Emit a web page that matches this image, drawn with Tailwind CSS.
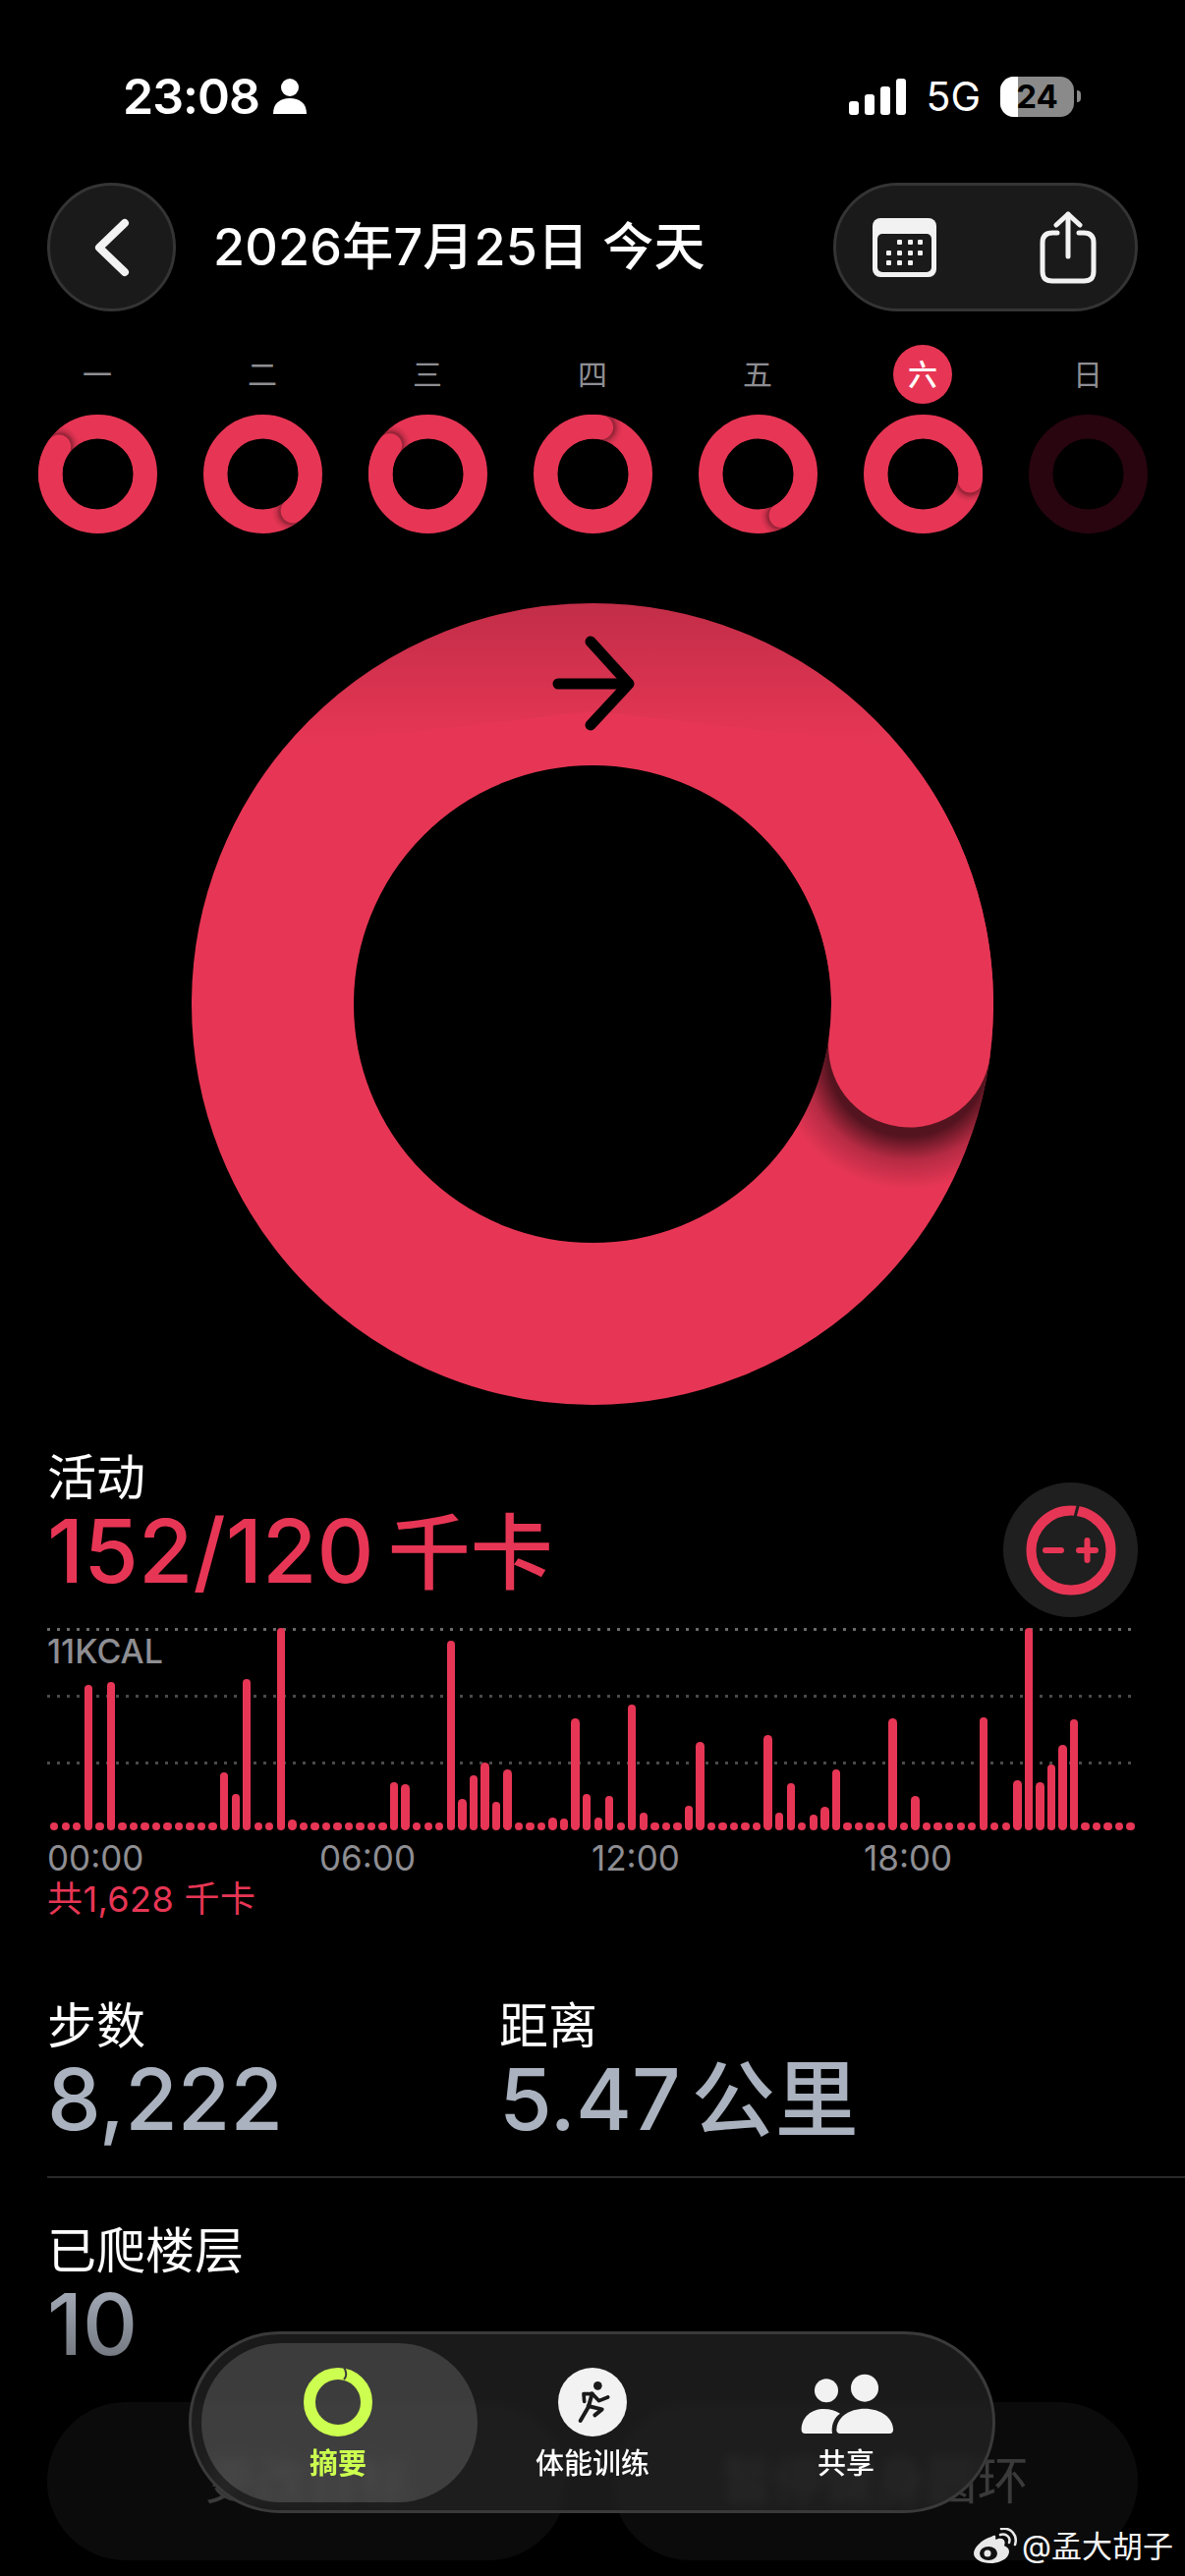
<!DOCTYPE html>
<html lang="zh">
  <head>
    <title>Activity</title>
    <meta charset="utf-8" />
    <meta name="viewport" content="width=device-width, initial-scale=1" />
    <script src="https://cdn.jsdelivr.net/npm/@tailwindcss/browser@4"></script>
  </head>
  <body class="bg-black">
    <div class="relative w-[1206px] h-[2622px] overflow-hidden bg-black text-white font-['Inter','Noto_Sans_CJK_SC',sans-serif]">
      <!-- status bar -->
      <div class="flex items-center justify-between h-[186px] pt-[10px] pl-[125px] pr-[106px]">
        <div class="flex items-center gap-[14px]">
          <span class="text-[50px] leading-none font-semibold tracking-[-1px]">23:08</span>
          <svg width="34" height="36" viewBox="0 0 34 36" fill="#fff">
            <circle cx="17" cy="9" r="9" />
            <path d="M0 36 C0 25 7 20 17 20 C27 20 34 25 34 36 Z" />
          </svg>
        </div>
        <div class="flex items-center">
          <svg width="58" height="37" viewBox="0 0 58 37" fill="#fff">
            <rect x="0" y="23" width="10" height="14" rx="3" />
            <rect x="16" y="16" width="10" height="21" rx="3" />
            <rect x="32" y="8" width="10" height="29" rx="3" />
            <rect x="48" y="0" width="10" height="37" rx="3" />
          </svg>
          <span class="ml-[20px] text-[41px] leading-none font-normal">5G</span>
          <div class="relative ml-[20px] w-[75px] h-[41px] rounded-[14px] overflow-hidden bg-[#8a8a8a] flex items-center justify-center">
            <div class="absolute left-0 top-0 bottom-0 w-[18px] bg-white"></div>
            <span class="relative text-[33px] leading-none font-bold text-black">24</span>
          </div>
          <div class="ml-[3px] w-[4px] h-[12px] rounded-r-full bg-[#8a8a8a]"></div>
        </div>
      </div>

      <!-- nav -->
      <div class="flex items-center justify-between h-[131px] px-[48px]">
        <div class="flex items-center">
          <button class="flex items-center justify-center w-[131px] h-[131px] rounded-full bg-[#1a1a1a] border-[3px] border-[#343434]">
            <svg width="40" height="60" viewBox="0 0 40 60" fill="none" stroke="#f2f2f2" stroke-width="8" stroke-linecap="round" stroke-linejoin="round">
              <path d="M33 5 L7 30 L33 55" />
            </svg>
          </button>
          <span class="ml-[38px] text-[52px] leading-none font-medium tracking-[0.2px]">2026年7月25日 今天</span>
        </div>
        <div class="flex items-center justify-between w-[310px] h-[131px] pl-[37px] pr-[39px] rounded-full bg-[#1a1a1a] border-[3px] border-[#343434]">
          <svg width="65" height="60" viewBox="0 0 65 60">
            <rect width="65" height="60" rx="8" fill="#f2f2f2" />
            <rect x="5" y="16" width="55" height="39" rx="5" fill="#1a1a1a" />
            <g fill="#f2f2f2">
              <rect x="25" y="22" width="5" height="5" rx="1" />
              <rect x="36" y="22" width="5" height="5" rx="1" />
              <rect x="46" y="22" width="5" height="5" rx="1" />
              <rect x="14" y="33" width="5" height="5" rx="1" />
              <rect x="25" y="33" width="5" height="5" rx="1" />
              <rect x="36" y="33" width="5" height="5" rx="1" />
              <rect x="46" y="33" width="5" height="5" rx="1" />
              <rect x="14" y="43" width="5" height="5" rx="1" />
              <rect x="25" y="43" width="5" height="5" rx="1" />
              <rect x="36" y="43" width="5" height="5" rx="1" />
            </g>
          </svg>
          <svg width="58" height="74" viewBox="0 0 58 74" fill="none" stroke="#f2f2f2" stroke-width="5" stroke-linecap="round" stroke-linejoin="round">
            <path d="M18 22 H13 C6 22 3 26 3 32 V61 C3 68 6 71 13 71 H45 C52 71 55 68 55 61 V32 C55 26 52 22 45 22 H40" />
            <path d="M29 46 V3" />
            <path d="M17 14 L29 3 L41 14" />
          </svg>
        </div>
      </div>

      <!-- week -->
      <div class="grid grid-cols-7 px-[15px] mt-[34px]">
        <div class="flex flex-col items-center"><span class="flex items-center justify-center w-[60px] h-[60px] text-[30px] text-[#8e8e93]">一</span><div class="week-ring mt-[11px] w-[121px] h-[121px]" data-angle="215" data-shade="0.45"></div></div>
        <div class="flex flex-col items-center"><span class="flex items-center justify-center w-[60px] h-[60px] text-[30px] text-[#8e8e93]">二</span><div class="week-ring mt-[11px] w-[121px] h-[121px]" data-angle="51" data-shade="0.45"></div></div>
        <div class="flex flex-col items-center"><span class="flex items-center justify-center w-[60px] h-[60px] text-[30px] text-[#8e8e93]">三</span><div class="week-ring mt-[11px] w-[121px] h-[121px]" data-angle="217" data-shade="0.45"></div></div>
        <div class="flex flex-col items-center"><span class="flex items-center justify-center w-[60px] h-[60px] text-[30px] text-[#8e8e93]">四</span><div class="week-ring mt-[11px] w-[121px] h-[121px]" data-angle="280" data-shade="0.45"></div></div>
        <div class="flex flex-col items-center"><span class="flex items-center justify-center w-[60px] h-[60px] text-[30px] text-[#8e8e93]">五</span><div class="week-ring mt-[11px] w-[121px] h-[121px]" data-angle="61" data-shade="0.45"></div></div>
        <div class="flex flex-col items-center"><span class="flex items-center justify-center w-[60px] h-[60px] rounded-full bg-[#e73655] text-[30px] text-white font-medium">六</span><div class="week-ring mt-[11px] w-[121px] h-[121px]" data-angle="8" data-shade="0.45"></div></div>
        <div class="flex flex-col items-center"><span class="flex items-center justify-center w-[60px] h-[60px] text-[30px] text-[#8e8e93]">日</span>
          <svg class="mt-[11px]" width="121" height="121" viewBox="-408 -408 816 816"><circle r="325.5" fill="none" stroke="#28050f" stroke-width="165" /></svg>
        </div>
      </div>

      <!-- big ring -->
      <div class="relative w-[816px] h-[816px] mx-auto mt-[71px]">
        <div class="week-ring w-[816px] h-[816px]" data-angle="7.6" data-shade="0.85"></div>
        <svg class="absolute inset-0" width="816" height="816" viewBox="0 0 816 816">
          <defs>
            <linearGradient id="topShade" x1="0" y1="0" x2="0" y2="1">
              <stop offset="0" stop-color="#000" stop-opacity="0.16" />
              <stop offset="1" stop-color="#000" stop-opacity="0" />
            </linearGradient>
          </defs>
          <path d="M408 0 A408 408 0 0 1 720 145 L408 110 L96 145 A408 408 0 0 1 408 0 Z" fill="url(#topShade)" />
          <g fill="none" stroke="#000" stroke-width="11" stroke-linecap="round" stroke-linejoin="round">
            <path d="M373 82 H442" />
            <path d="M406 39 L445 82 L406 124" />
          </g>
        </svg>
      </div>

      <!-- activity -->
      <div class="px-[48px] mt-[44px]">
        <div class="flex items-start justify-between">
          <div>
            <div class="h-[60px] text-[50px] leading-[60px]">活动</div>
            <div class="h-[90px] leading-[90px] font-medium text-[#e73655] whitespace-nowrap"><span class="text-[90px]">152/120</span><span class="text-[84px] ml-[14px]">千卡</span></div>
          </div>
          <button class="flex items-center justify-center w-[137px] h-[137px] mt-[35px] rounded-full bg-[#1f1f1f]">
            <svg width="92" height="92" viewBox="0 0 92 92" fill="none" stroke="#e73655" stroke-linecap="round">
              <circle cx="46" cy="46" r="40.5" stroke-width="10" />
              <path d="M53 1 L50 12" stroke="#1f1f1f" stroke-width="3" />
              <path d="M20 46 H36" stroke-width="6" />
              <path d="M54 46 H71 M62.5 36 V56" stroke-width="6" />
            </svg>
          </button>
        </div>

        <!-- chart -->
        <div class="relative h-[206px] mt-[11px]">
          <div class="absolute left-0 w-[1104px] top-0 h-[3px] bg-[repeating-linear-gradient(90deg,#6a6a6a_0_3px,transparent_3px_10px)]"></div>
          <div class="absolute left-0 w-[1104px] top-[68px] h-[3px] bg-[repeating-linear-gradient(90deg,#4a4a4a_0_3px,transparent_3px_10px)]"></div>
          <div class="absolute left-0 w-[1104px] top-[136px] h-[3px] bg-[repeating-linear-gradient(90deg,#4a4a4a_0_3px,transparent_3px_10px)]"></div>
          <div class="absolute left-0 top-[4px] text-[34px] leading-[40px] font-medium text-[#8e8e93]">11KCAL</div>
          <div id="bars" class="relative flex items-end justify-between h-[206px] ml-[3px] w-[1104px]"></div>
        </div>
        <div class="grid grid-cols-4 w-[1108px] mt-[8px] text-[35px] leading-[40px] text-[#8e8e93]">
          <span>00:00</span>
          <span>06:00</span>
          <span>12:00</span>
          <span>18:00</span>
        </div>
        <div class="mt-[2px] text-[36px] leading-[40px] tracking-[0.4px] text-[#e73655]">共1,628 千卡</div>

        <!-- stats -->
        <div class="flex mt-[79px]">
          <div class="w-[460px]">
            <div class="h-[60px] text-[50px] leading-[60px]">步数</div>
            <div class="h-[90px] text-[87px] leading-[90px] font-medium text-[#aab2bf]">8,222</div>
          </div>
          <div>
            <div class="h-[60px] text-[50px] leading-[60px]">距离</div>
            <div class="h-[90px] leading-[90px] font-medium text-[#aab2bf] whitespace-nowrap"><span class="text-[87px]">5.47</span><span class="text-[85px] ml-[11px]">公里</span></div>
          </div>
        </div>
      </div>

      <div class="ml-[48px] mt-[33px] h-[2px] bg-[#2a2a2a]"></div>

      <div class="px-[48px] mt-[44px]">
        <div class="h-[60px] text-[50px] leading-[60px]">已爬楼层</div>
        <div class="h-[90px] text-[87px] leading-[90px] font-medium bg-gradient-to-b from-[#aab2bf] to-[#6c7078] bg-clip-text text-transparent w-fit">10</div>
        <div class="flex justify-between mt-[34px]">
          <div class="flex items-center justify-center w-[529px] h-[161px] rounded-[80px] bg-[#0b0b0b] text-[52px] text-[#3a3a3a]">更改目标</div>
          <div class="flex items-center justify-center w-[535px] h-[161px] rounded-[80px] bg-[#0b0b0b] text-[52px] text-[#3a3a3a]">暂停健身圆环</div>
        </div>
      </div>

      <!-- tab bar -->
      <div class="absolute left-[192px] top-[2373px] flex items-center w-[821px] h-[185px] pl-[10px] rounded-full bg-[#252525]/70 backdrop-blur-[6px] border-[3px] border-[#3a3a3a]">
        <div class="flex flex-col items-center w-[281px] h-[162px] pt-[25px] pr-[3px] rounded-full bg-white/15">
          <svg width="70" height="70" viewBox="0 0 70 70" fill="none">
            <circle cx="35" cy="35" r="29" stroke="#ccff4f" stroke-width="12" />
            <path d="M41 0 C44 4 44 9 41 12" stroke="#3c3c3c" stroke-width="2" />
          </svg>
          <span class="mt-[10px] text-[29px] leading-[36px] font-semibold text-[#ccff4f]">摘要</span>
        </div>
        <div class="flex flex-col items-center w-[234px] h-[162px] pt-[25px]">
          <svg width="70" height="70" viewBox="80 45 210 210">
            <circle cx="185" cy="150" r="105" fill="#f2f2f2" />
            <circle cx="201" cy="100" r="13" fill="#1a1a1a" />
            <g fill="none" stroke="#1a1a1a" stroke-width="11" stroke-linecap="round" stroke-linejoin="round">
              <path d="M160 148 L158 125 H185 L205 146 L232 135" />
              <path d="M184 124 L172 166 L148 207" stroke-width="12" />
              <path d="M172 162 L214 172 L192 190" stroke-width="12" />
            </g>
          </svg>
          <span class="mt-[10px] text-[29px] leading-[36px] font-medium">体能训练</span>
        </div>
        <div class="flex flex-col items-center w-[282px] h-[162px] pt-[25px]">
          <svg class="ml-[3px]" width="98" height="70" viewBox="822 40 294 210" fill="#f2f2f2">
            <circle cx="903" cy="110" r="36" />
            <circle cx="1020" cy="102" r="42" />
            <path d="M827 230 C827 190 858 166 895 166 C915 166 932 172 945 180 C928 192 920 210 920 232 L921 241 H838 C831 241 827 237 827 230 Z" />
            <path d="M934 230 C934 192 972 165 1020 165 C1068 165 1107 192 1107 230 C1107 237 1103 241 1096 241 H945 C938 241 934 237 934 230 Z" />
          </svg>
          <span class="mt-[10px] text-[29px] leading-[36px] font-medium">共享</span>
        </div>
      </div>

      <!-- watermark -->
      <div class="absolute right-[12px] top-[2572px] flex items-center gap-[5px] h-[38px]">
        <svg width="44" height="36" viewBox="0 0 44 36">
          <path d="M18 9 C8 12 0 20 0 26 C0 32 8 36 17 36 C27 36 36 31 36 24 C36 20 32 19 31 18 C33 13 30 10 25 11 C23 12 22 12 22 11 C23 7 21 7 18 9 Z" fill="#e8e8e8" />
          <ellipse cx="15" cy="26" rx="9" ry="7" fill="#111" />
          <circle cx="14" cy="26" r="3.5" fill="#e8e8e8" />
          <g fill="none" stroke="#e8e8e8" stroke-width="2.5" stroke-linecap="round">
            <path d="M27 7 C33 5 38 10 36 15" />
            <path d="M28 1 C38 -1 45 8 42 17" />
          </g>
        </svg>
        <span class="text-[31px] leading-none text-[#f5f5f5]">@孟大胡子</span>
      </div>
    </div>

    <script>
      const ringTemplate = (angle, shade) => `
        <svg width="100%" height="100%" viewBox="-408 -408 816 816">
          <defs>
            <clipPath id="clip${angle}"><path clip-rule="evenodd" d="M-408 0 A408 408 0 1 1 408 0 A408 408 0 1 1 -408 0 Z M-243 0 A243 243 0 1 0 243 0 A243 243 0 1 0 -243 0 Z" /></clipPath>
            <radialGradient id="shade${angle}">
              <stop offset="0.6" stop-color="#000" stop-opacity="0.75" />
              <stop offset="0.78" stop-color="#000" stop-opacity="0.25" />
              <stop offset="1" stop-color="#000" stop-opacity="0" />
            </radialGradient>
          </defs>
          <circle r="325.5" fill="none" stroke="#e73655" stroke-width="165" />
          <g transform="rotate(${angle})">
            <circle cx="325.5" cy="10" r="136" fill="url(#shade${angle})" opacity="${shade}" clip-path="url(#clip${angle})" />
            <path d="M241.9 -217.8 A325.5 325.5 0 0 1 325.5 0" fill="none" stroke="#e73655" stroke-width="165" stroke-linecap="round" />
          </g>
        </svg>`;

      document.querySelectorAll(".week-ring").forEach((el) => {
        el.innerHTML = ringTemplate(el.dataset.angle, el.dataset.shade);
      });

      // one bar per 15 minutes, heights in px
      const heights = [
        8, 8, 8, 148, 8, 151, 8, 8, 8, 8, 8, 8, 8, 8, 8, 59, 37, 154, 8, 8, 206, 11, 8, 8, 8, 8, 8, 8, 8, 8, 49, 47,
        8, 8, 8, 193, 32, 56, 69, 29, 62, 8, 8, 8, 13, 12, 114, 37, 13, 35, 8, 128, 18, 8, 8, 8, 25, 90, 8, 8, 8, 8,
        8, 97, 18, 48, 8, 16, 24, 62, 8, 8, 8, 8, 114, 8, 35, 8, 8, 8, 8, 8, 115, 8, 8, 51, 206, 49, 67, 87, 113, 8,
        8, 8, 8, 8,
      ];
      const bars = document.getElementById("bars");
      heights.forEach((h) => {
        const bar = document.createElement("div");
        bar.className = "w-[8.4px] rounded-full bg-[#e73655]";
        bar.style.height = h + "px";
        bars.appendChild(bar);
      });
    </script>
  </body>
</html>
